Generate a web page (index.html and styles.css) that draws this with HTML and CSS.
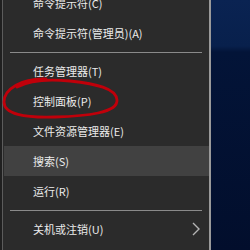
FILE: index.html
```html
<!DOCTYPE html>
<html lang="zh-CN">
<head>
<meta charset="utf-8">
<link rel="stylesheet" href="styles.css">
</head>
<body>
<div class="screen">
  <div class="edge"></div>
  <div class="menu">
    <div class="item">命令提示符(C)</div>
    <div class="item">命令提示符(管理员)(A)</div>
    <div class="sep"></div>
    <div class="item">任务管理器(T)</div>
    <div class="item">控制面板(P)</div>
    <div class="item">文件资源管理器(E)</div>
    <div class="item active">搜索(S)</div>
    <div class="item">运行(R)</div>
    <div class="sep"></div>
    <div class="item sub">关机或注销(U)
      <svg class="chev" width="8" height="14" viewBox="0 0 8 14"><path d="M1 1 L7 7 L1 13" fill="none" stroke="#b4b4b4" stroke-width="1.4"/></svg>
    </div>
  </div>
  <div class="divider"></div>
  <div class="desktop"></div>
  <svg class="circle" width="250" height="250" viewBox="0 0 250 250">
    <path d="M46 79 C22 78 4 89 4 102 C4 114 24 118 55 117 C86 116 118 113 117 100 C116 88 96 84 70 81 C50 79 30 80 17 87" fill="none" stroke="#c0000a" stroke-width="2.8" stroke-linecap="round"/>
  </svg>
</div>
</body>
</html>
```
FILE: styles.css
```css
html, body {
  margin: 0;
  padding: 0;
  background: #03123a;
}
.screen {
  position: relative;
  width: 250px;
  height: 250px;
  overflow: hidden;
  display: flex;
  font-family: "Noto Sans CJK SC", "Noto Sans", sans-serif;
  font-size: 11px;
  color: #ececec;
}
.edge {
  width: 2px;
  background: #202020;
  flex: none;
}
.menu {
  width: 205px;
  flex: none;
  background: #2b2b2b;
  border-left: 1px solid #5c5c5c;
  padding-left: 1px;
  margin-top: -12px;
  display: flex;
  flex-direction: column;
}
.item {
  height: 30px;
  flex: none;
  display: flex;
  align-items: center;
  padding-left: 29px;
  line-height: 1;
  white-space: nowrap;
}
.item.active {
  background: #414141;
}
.item.sub {
  justify-content: space-between;
  padding-right: 9px;
}
.chev {
  display: block;
}
.sep {
  height: 8px;
  flex: none;
  display: flex;
  align-items: center;
  margin: 0 7px 0 6px;
}
.sep::before {
  content: "";
  flex: 1;
  height: 1px;
  background: #8a8a8a;
}
.divider {
  width: 2px;
  flex: none;
  background: #9a9a9a;
}
.desktop {
  flex: 1;
  background: linear-gradient(180deg, #0a2352 0px, #08204c 46px, #031438 52px, #020e2c 250px);
}
.circle {
  position: absolute;
  left: 0;
  top: 0;
  pointer-events: none;
}
```
